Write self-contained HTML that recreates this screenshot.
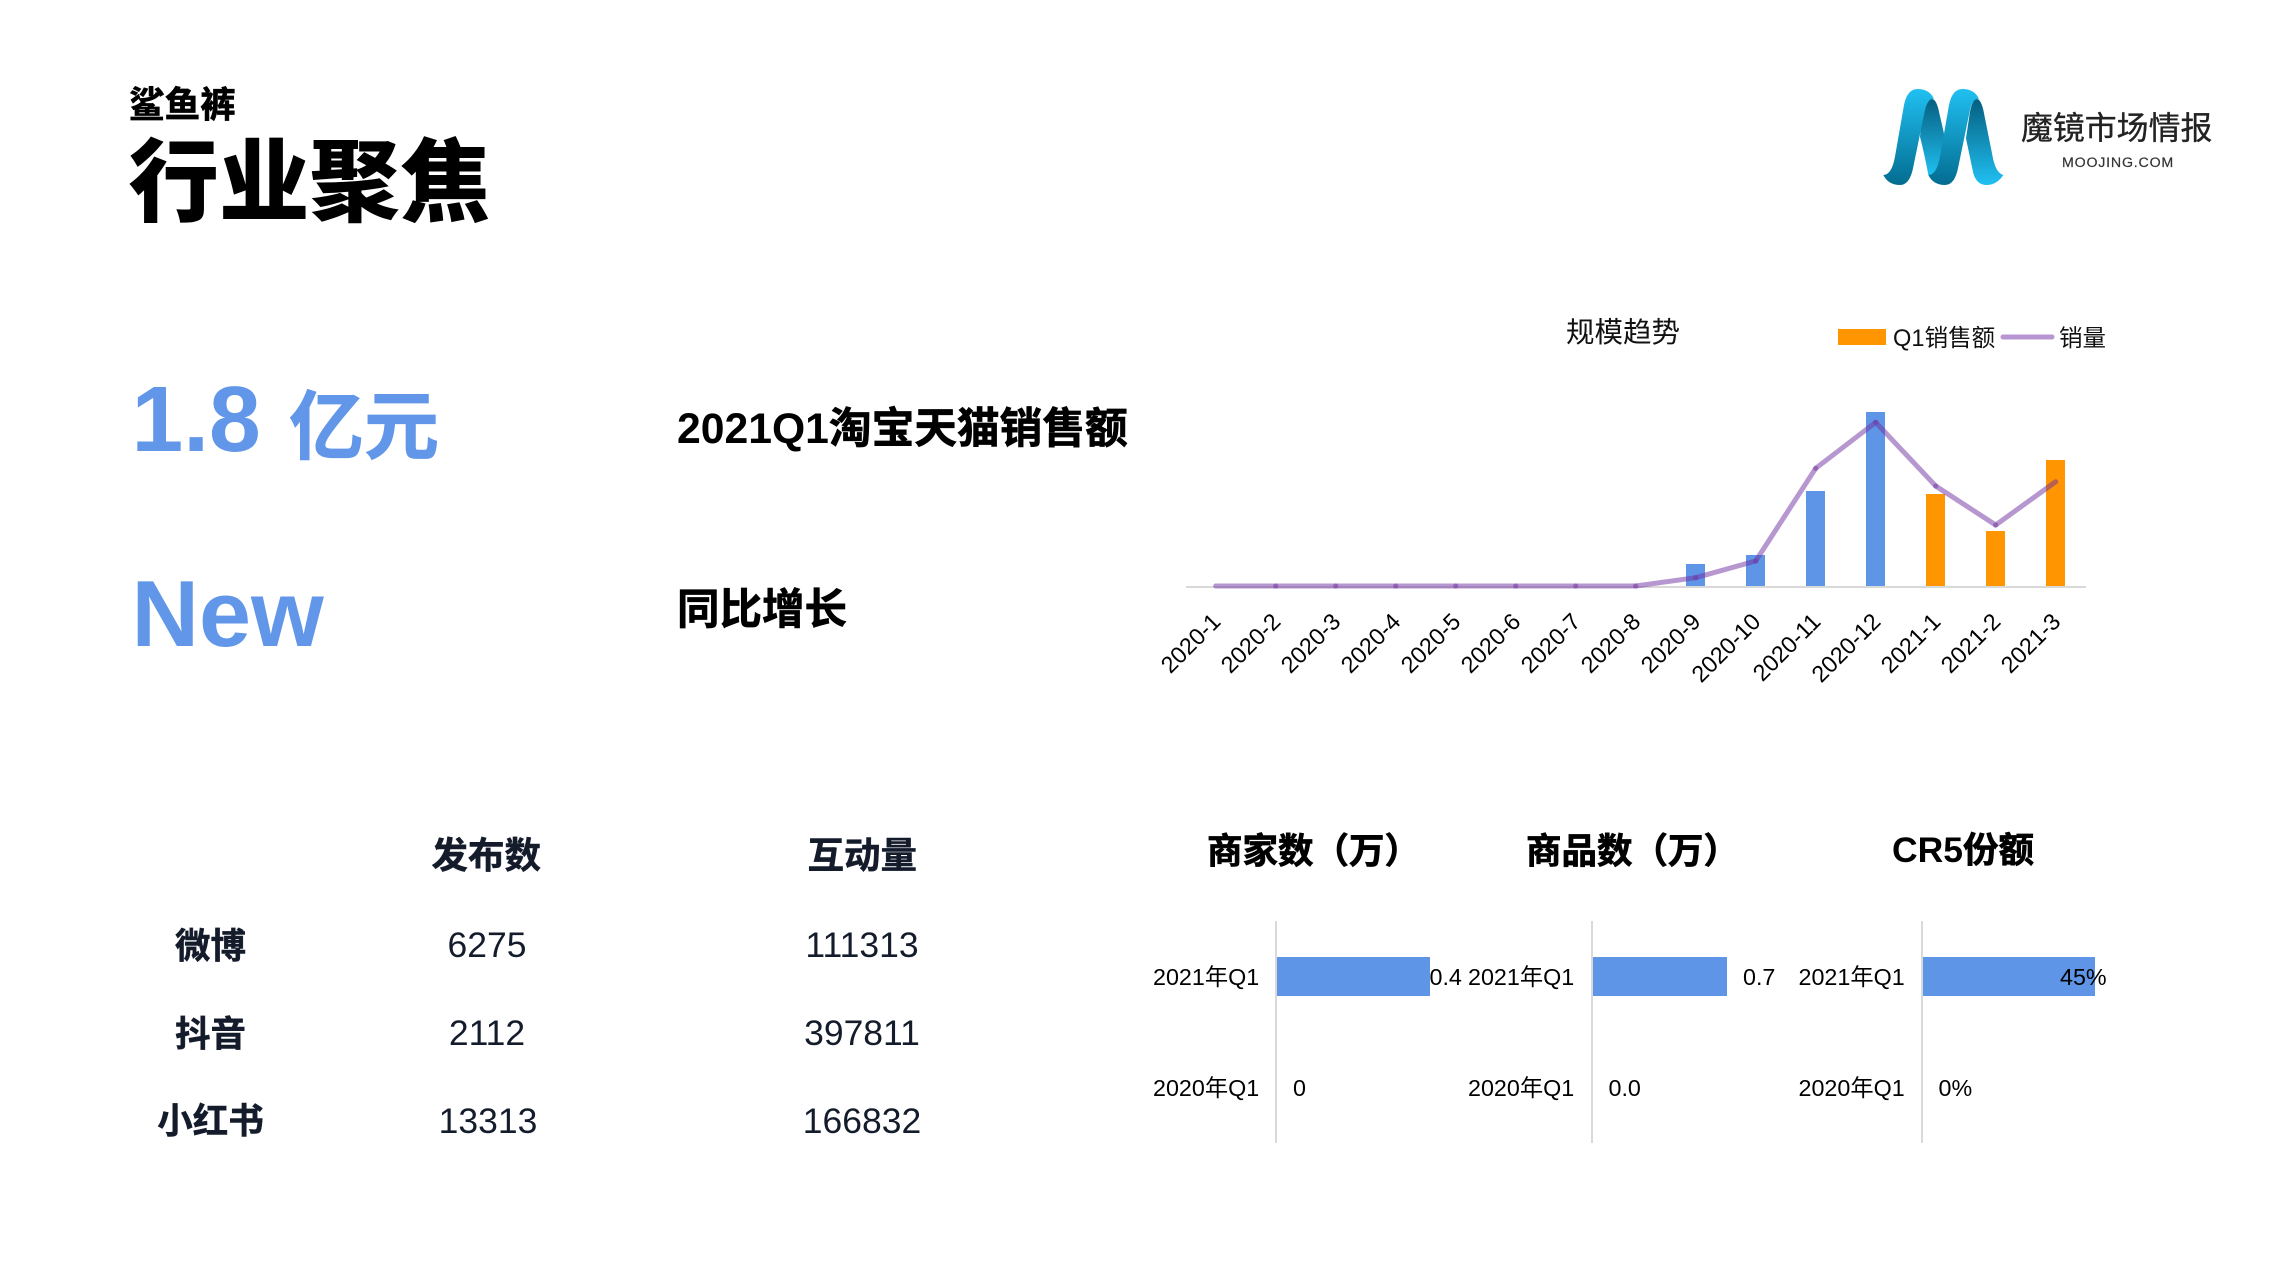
<!DOCTYPE html>
<html lang="zh-CN"><head><meta charset="utf-8"><title>行业聚焦</title>
<style>
html,body{margin:0;padding:0;background:#fff;width:2275px;height:1280px;overflow:hidden}
svg{display:block}
text{font-family:"Liberation Sans","Noto Sans CJK SC",sans-serif;white-space:pre}
.b{font-weight:700}
.lab{font-size:23.3px;fill:#000}
.t{font-size:35.5px;font-weight:700;fill:#000}
.n{font-size:35.5px;fill:#141c2c;text-anchor:middle}
.h{font-size:35.5px;font-weight:700;fill:#141c2c;text-anchor:middle;stroke:#141c2c;stroke-width:.5px}
.tick{font-size:23.4px;fill:#000;text-anchor:end}
.s{stroke:#000;stroke-width:.7px}
</style></head><body>
<svg width="2275" height="1280" viewBox="0 0 2275 1280" xmlns="http://www.w3.org/2000/svg">
<defs>
<linearGradient id="g1" x1="0" y1="0" x2="0" y2="1"><stop offset="0" stop-color="#20c0f2"/><stop offset="1" stop-color="#036c90"/></linearGradient>
<linearGradient id="g2" x1="0" y1="0" x2="0" y2="1"><stop offset="0" stop-color="#055f80"/><stop offset="1" stop-color="#20c0f2"/></linearGradient>
</defs>

<text x="129" y="117" class="b s" font-size="35.6" fill="#000">鲨鱼裤</text>
<text x="128.5" y="214" font-size="90.5" font-weight="900" fill="#000">行业聚焦</text>

<g transform="translate(1860,60) scale(.33333)">
<path fill="url(#g2)" d="M187 165Q200 117 215 117Q230 117 238 160L268 290Q250 345 215 348L205 345Q195 290 180 230Z"/>
<path fill="url(#g1)" d="M70 345Q95 345 105 290L132 135Q142 87 172 87Q210 87 222 118Q205 112 195 150L160 320Q150 375 120 375Q85 375 70 345Z"/>
<path fill="url(#g2)" d="M318 235L330 155Q338 117 350 117Q362 117 370 150L400 300Q410 340 430 345Q410 375 380 375Q350 375 340 340Z"/>
<path fill="url(#g1)" d="M205 345Q230 345 240 290L267 135Q277 87 307 87Q345 87 357 118Q340 112 330 150L295 320Q285 375 255 375Q220 375 205 345Z"/>
</g>
<text x="2021" y="139" font-size="31.9" fill="#222" stroke="#222" stroke-width=".35">魔镜市场情报</text>
<text x="2062" y="167" font-size="14.2" letter-spacing=".8" fill="#333" stroke="#333" stroke-width=".2">MOOJING.COM</text>

<text x="131.5" y="451" class="b" font-size="93" fill="#6196e9">1.8</text>
<text x="289" y="453" class="b" font-size="75" fill="#6196e9" stroke="#6196e9" stroke-width=".8">亿元</text>
<text x="131.5" y="646" class="b" font-size="93.5" fill="#6196e9">New</text>
<text x="677" y="443" class="b" font-size="42.7" fill="#000">2021Q1<tspan class="s">淘宝天猫销售额</tspan></text>
<text x="677" y="624" class="b s" font-size="42.5" fill="#000">同比增长</text>

<text x="1566" y="342" font-size="28.5" fill="#111">规模趋势</text>
<rect x="1838" y="329" width="48" height="16" fill="#ff9500"/>
<text x="1893" y="346" font-size="23.6" fill="#111">Q1销售额</text>
<line x1="2003" y1="337" x2="2052" y2="337" stroke="#b795d2" stroke-width="5" stroke-linecap="round"/>
<text x="2059" y="346" font-size="23.5" fill="#111">销量</text>

<rect x="1186" y="586" width="900" height="2" fill="#d9d9d9"/>
<g fill="#5e95e6">
<rect x="1686" y="564" width="19" height="22"/>
<rect x="1746" y="555" width="19" height="31"/>
<rect x="1806" y="491" width="19" height="95"/>
<rect x="1866" y="412" width="19" height="174"/>
</g>
<g fill="#ff9500">
<rect x="1926" y="494" width="19" height="92"/>
<rect x="1986" y="531" width="19" height="55"/>
<rect x="2046" y="460" width="19" height="126"/>
</g>
<polyline points="1215.7,586 1275.7,586 1335.7,586 1395.7,586 1455.7,586 1515.7,586 1575.7,586 1635.7,586 1695.7,577.7 1755.7,561 1815.7,468.3 1875.7,422.3 1935.7,486 1995.7,525 2055.7,481.7" fill="none" stroke="#7030a0" stroke-opacity=".5" stroke-width="5" stroke-linecap="round" stroke-linejoin="round"/>
<g fill="#7030a0" fill-opacity=".5">
<circle cx="1275.7" cy="586" r="2.6"/><circle cx="1335.7" cy="586" r="2.6"/><circle cx="1395.7" cy="586" r="2.6"/><circle cx="1455.7" cy="586" r="2.6"/><circle cx="1515.7" cy="586" r="2.6"/><circle cx="1575.7" cy="586" r="2.6"/><circle cx="1635.7" cy="586" r="2.6"/><circle cx="1695.7" cy="577.7" r="2.6"/><circle cx="1755.7" cy="561" r="2.6"/><circle cx="1815.7" cy="468.3" r="2.6"/><circle cx="1875.7" cy="422.3" r="2.6"/><circle cx="1935.7" cy="486" r="2.6"/><circle cx="1995.7" cy="525" r="2.6"/>
</g>
<g class="ticks">
<text class="tick" transform="translate(1222,623) rotate(-45)">2020-1</text>
<text class="tick" transform="translate(1282,623) rotate(-45)">2020-2</text>
<text class="tick" transform="translate(1342,623) rotate(-45)">2020-3</text>
<text class="tick" transform="translate(1402,623) rotate(-45)">2020-4</text>
<text class="tick" transform="translate(1462,623) rotate(-45)">2020-5</text>
<text class="tick" transform="translate(1522,623) rotate(-45)">2020-6</text>
<text class="tick" transform="translate(1582,623) rotate(-45)">2020-7</text>
<text class="tick" transform="translate(1642,623) rotate(-45)">2020-8</text>
<text class="tick" transform="translate(1702,623) rotate(-45)">2020-9</text>
<text class="tick" transform="translate(1762,623) rotate(-45)">2020-10</text>
<text class="tick" transform="translate(1822,623) rotate(-45)">2020-11</text>
<text class="tick" transform="translate(1882,623) rotate(-45)">2020-12</text>
<text class="tick" transform="translate(1942,623) rotate(-45)">2021-1</text>
<text class="tick" transform="translate(2002,623) rotate(-45)">2021-2</text>
<text class="tick" transform="translate(2062,623) rotate(-45)">2021-3</text>
</g>

<text x="431.5" y="868" class="h" style="text-anchor:start;font-size:36.5px">发布数</text>
<text x="807.5" y="868" class="h" style="text-anchor:start;font-size:36.5px">互动量</text>
<text x="210.5" y="958" class="h">微博</text>
<text x="210.5" y="1046" class="h">抖音</text>
<text x="210.5" y="1133" class="h">小红书</text>
<text x="487" y="957" class="n">6275</text>
<text x="487" y="1045" class="n">2112</text>
<text x="488" y="1133" class="n">13313</text>
<text x="862" y="957" class="n">111313</text>
<text x="862" y="1045" class="n">397811</text>
<text x="862" y="1133" class="n">166832</text>

<text x="1207" y="863" class="t s">商家数（万）</text>
<text x="1526" y="863" class="t s">商品数（万）</text>
<text x="1892" y="862" class="t">CR5<tspan class="s">份额</tspan></text>

<rect x="1275" y="921" width="2" height="222" fill="#d9d9d9"/>
<rect x="1591" y="921" width="2" height="222" fill="#d9d9d9"/>
<rect x="1921" y="921" width="2" height="222" fill="#d9d9d9"/>
<rect x="1277" y="957" width="153" height="39" fill="#5e95e6"/>
<rect x="1593" y="957" width="134" height="39" fill="#5e95e6"/>
<rect x="1923" y="957" width="172" height="39" fill="#5e95e6"/>

<text x="1153" y="985" class="lab">2021年Q1</text>
<text x="1153" y="1096" class="lab">2020年Q1</text>
<text x="1468" y="985" class="lab">2021年Q1</text>
<text x="1468" y="1096" class="lab">2020年Q1</text>
<text x="1798.5" y="985" class="lab">2021年Q1</text>
<text x="1798.5" y="1096" class="lab">2020年Q1</text>
<text x="1429.5" y="985" class="lab">0.4</text>
<text x="1293" y="1096" class="lab">0</text>
<text x="1743" y="985" class="lab">0.7</text>
<text x="1608.5" y="1096" class="lab">0.0</text>
<text x="2060" y="985" class="lab">45%</text>
<text x="1938.5" y="1096" class="lab">0%</text>
</svg>
</body></html>
